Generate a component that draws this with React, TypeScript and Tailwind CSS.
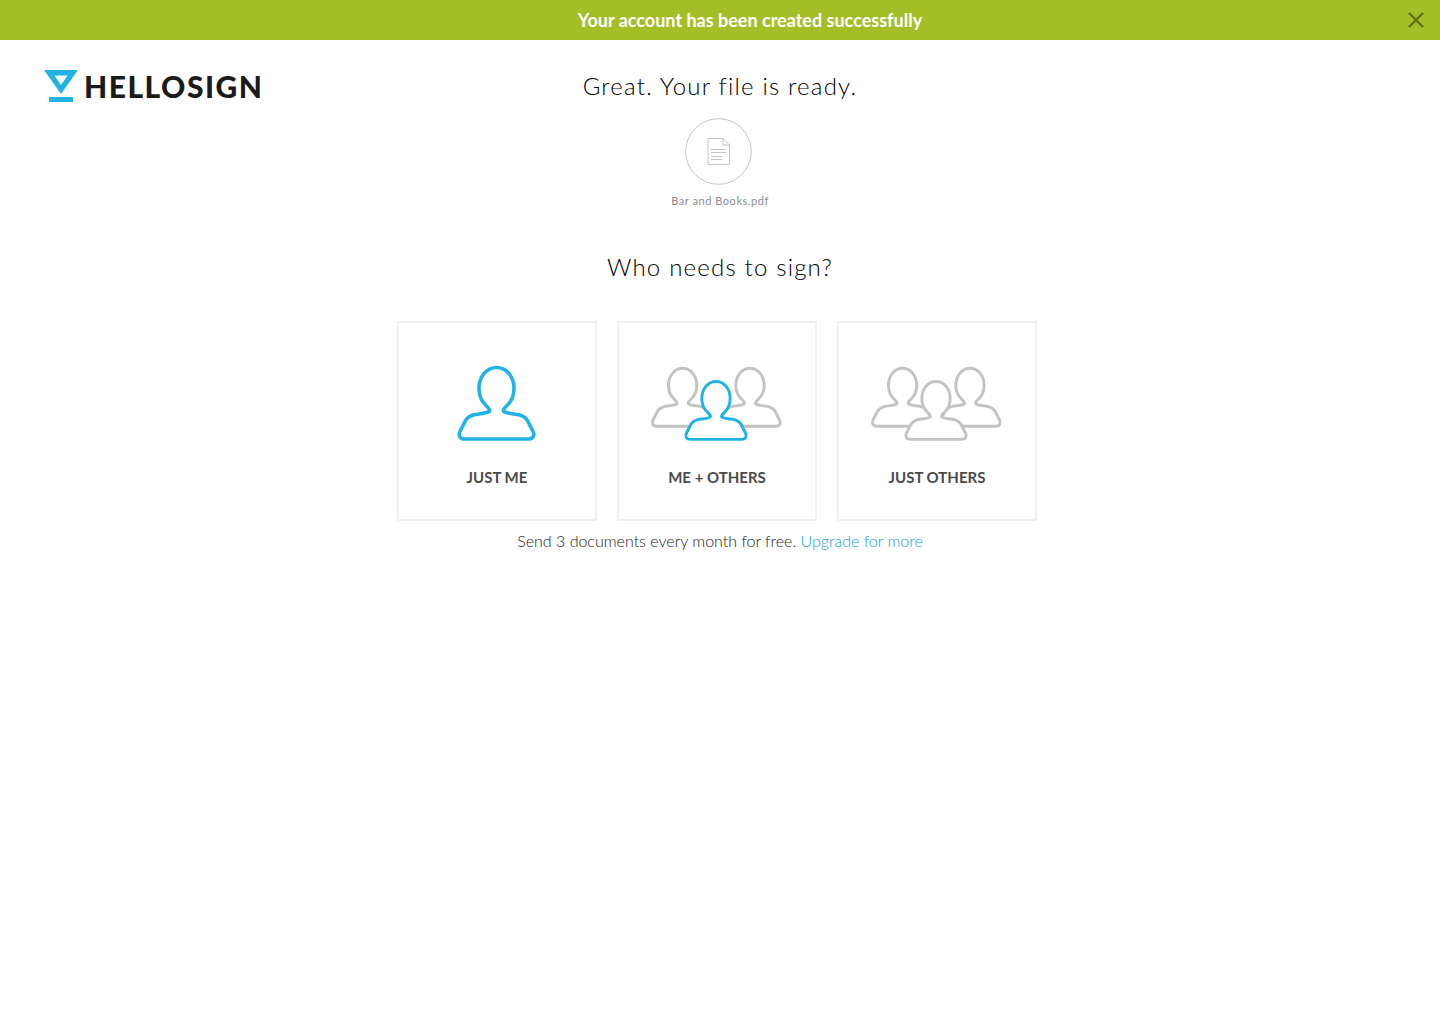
const BLUE = "#21b2e6";
const GRAY = "#c3c3c3";

const PERSON =
  "M39.5 2.5C29.5 2.5 22 12 22 23.5C22 31.5 25 37 29.5 41C32.5 43.8 33.4 45.7 32 46.7C28 48.7 22 48.7 17 49.7C12 51 9.8 53 8.3 56L3 66.5C1 70.5 3 74 7.5 74H71.5C76 74 78 70.5 76 66.5L70.7 56C69.2 53 67 51 62 49.7C57 48.7 51 48.7 47 46.7C45.6 45.7 46.5 43.8 49.5 41C54 37 57 31.5 57 23.5C57 12 49.5 2.5 39.5 2.5Z";

function PersonIcon() {
  return (
    <svg width="80" height="76" viewBox="0 0 80 76" aria-hidden="true">
      <path d={PERSON} fill="white" stroke={BLUE} strokeWidth="3.6" strokeLinejoin="round" />
    </svg>
  );
}

function GroupIcon({ front }: { front: string }) {
  return (
    <svg width="134" height="76" viewBox="0 0 134 76" aria-hidden="true">
      <g fill="white" strokeWidth="3.6" strokeLinejoin="round">
        <path d={PERSON} stroke={GRAY} transform="translate(.6 1.3) scale(.81)" />
        <path d={PERSON} stroke={GRAY} transform="translate(68 1.3) scale(.81)" />
        <path d={PERSON} stroke={front} transform="translate(34 14.4) scale(.81)" />
      </g>
    </svg>
  );
}

function FileIcon() {
  return (
    <svg width="70" height="67" viewBox="0 0 70 67" fill="none" stroke="#c4c4c4" aria-hidden="true">
      <circle cx="33.5" cy="33.5" r="32.8" />
      <path d="M23 20.5H38L44.5 27V46.5H23ZM38 20.5V27H44.5" />
      <path d="M26 31.5H41M26 34.5H41M26 38.5H37.5M26 41.5H37.5" />
    </svg>
  );
}

function Logo() {
  return (
    <a href="#" className="flex items-center gap-1.5 text-[#1b1b1b]">
      <svg width="34" height="32" viewBox="0 0 34 32" fill={BLUE} aria-hidden="true">
        <path fillRule="evenodd" d="M0 0H34L17 24ZM10.5 5.5L17 15L23.5 5.5Z" />
        <path d="M5 27H29V32H5Z" />
      </svg>
      <span className="text-[30px] leading-8 font-black tracking-wider">HELLOSIGN</span>
    </a>
  );
}

const options = [
  { label: "JUST ME", icon: <PersonIcon /> },
  { label: "ME + OTHERS", icon: <GroupIcon front={BLUE} /> },
  { label: "JUST OTHERS", icon: <GroupIcon front={GRAY} /> },
];

export default function App() {
  return (
    <div className="min-h-screen bg-white font-['Lato',sans-serif] text-[#1b1b1b]">
      <div role="status" className="flex h-10 items-center bg-[#a4be27] pl-27">
        <p className="flex-1 text-center text-lg font-bold text-white">
          Your account has been created successfully
        </p>
        <button type="button" aria-label="Close" className="flex size-12 items-center justify-center">
          <svg width="16" height="16" viewBox="0 0 16 16" stroke="#5c6b16" strokeWidth="2" aria-hidden="true">
            <path d="M1 1L15 15M15 1L1 15" />
          </svg>
        </button>
      </div>

      <header className="grid grid-cols-[1fr_auto_1fr] items-center px-11 pt-7">
        <Logo />
        <h1 className="text-2xl leading-9 font-light tracking-wider text-black">Great. Your file is ready.</h1>
      </header>

      <main className="flex flex-col items-center px-4 pt-3.5">
        <FileIcon />
        <p className="mt-2 text-[11px] leading-4 tracking-wider text-[#8c8c8c]">Bar and Books.pdf</p>

        <h2 className="mt-10 text-2xl leading-9 font-light tracking-wider text-black">Who needs to sign?</h2>

        <div className="mt-9 flex w-full max-w-[646px] flex-wrap gap-5">
          {options.map((o) => (
            <button
              key={o.label}
              type="button"
              className="flex size-50 flex-col items-center border-2 border-[#f0f0f0] pt-10"
            >
              <span className="flex h-20 items-center">{o.icon}</span>
              <span className="mt-6 text-[15px] leading-5 font-bold text-[#4a4a4a]">{o.label}</span>
            </button>
          ))}
        </div>

        <p className="mt-2 text-base leading-6 font-light text-[#222222]">
          Send 3 documents every month for free.{" "}
          <a href="#" className="text-[#0f9fd6]">
            Upgrade for more
          </a>
        </p>
      </main>
    </div>
  );
}
